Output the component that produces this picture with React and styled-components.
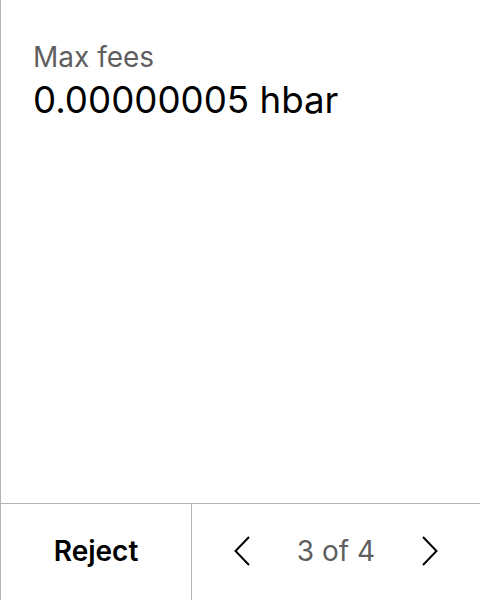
import React from "react";
import styled, { createGlobalStyle } from "styled-components";

const Global = createGlobalStyle`
  html, body { margin: 0; padding: 0; background: #fff; }
  body { font-family: Inter, "Liberation Sans", sans-serif; }
`;

const Screen = styled.div`
  width: 480px;
  height: 600px;
  box-sizing: border-box;
  border-left: 1px solid #b4b4b4;
  display: flex;
  flex-direction: column;
  overflow: hidden;
`;

const Body = styled.div`
  flex: 1;
  padding: 40px 32px 0;
  display: flex;
  flex-direction: column;
  gap: 4px;
`;

const Label = styled.div`
  font-size: 28px;
  line-height: 34px;
  color: #5f5f5f;
`;

const Value = styled.div`
  font-size: 36.7px;
  line-height: 44px;
  color: #000;
`;

const Footer = styled.div`
  height: 96px;
  border-top: 1px solid #b4b4b4;
  display: grid;
  grid-template-columns: 191px 1fr;
`;

const RejectButton = styled.button`
  all: unset;
  display: flex;
  align-items: center;
  justify-content: center;
  padding-bottom: 3px;
  font-family: Inter, "Liberation Sans", sans-serif;
  font-size: 28px;
  font-weight: 600;
  color: #000;
  border-right: 1px solid #b4b4b4;
`;

const Pager = styled.div`
  display: flex;
  align-items: center;
  justify-content: space-between;
  padding: 0 42px 3px 42px;
`;

const Arrow = styled.button`
  all: unset;
  display: flex;
  width: 16px;
  height: 30px;
`;

const PageText = styled.span`
  font-size: 28px;
  color: #5f5f5f;
`;

const Chevron = ({ dir }) => (
  <svg width="16" height="30" viewBox="0 0 16 30" fill="none">
    <path
      d={dir === "left" ? "M15 1 L1.5 15 L15 29" : "M1 1 L14.5 15 L1 29"}
      stroke="#000"
      strokeWidth="2"
    />
  </svg>
);

export default function App() {
  return (
    <>
      <Global />
      <Screen>
        <Body>
          <Label>Max fees</Label>
          <Value>0.00000005 hbar</Value>
        </Body>
        <Footer>
          <RejectButton>Reject</RejectButton>
          <Pager>
            <Arrow aria-label="Previous"><Chevron dir="left" /></Arrow>
            <PageText>3 of 4</PageText>
            <Arrow aria-label="Next"><Chevron dir="right" /></Arrow>
          </Pager>
        </Footer>
      </Screen>
    </>
  );
}
